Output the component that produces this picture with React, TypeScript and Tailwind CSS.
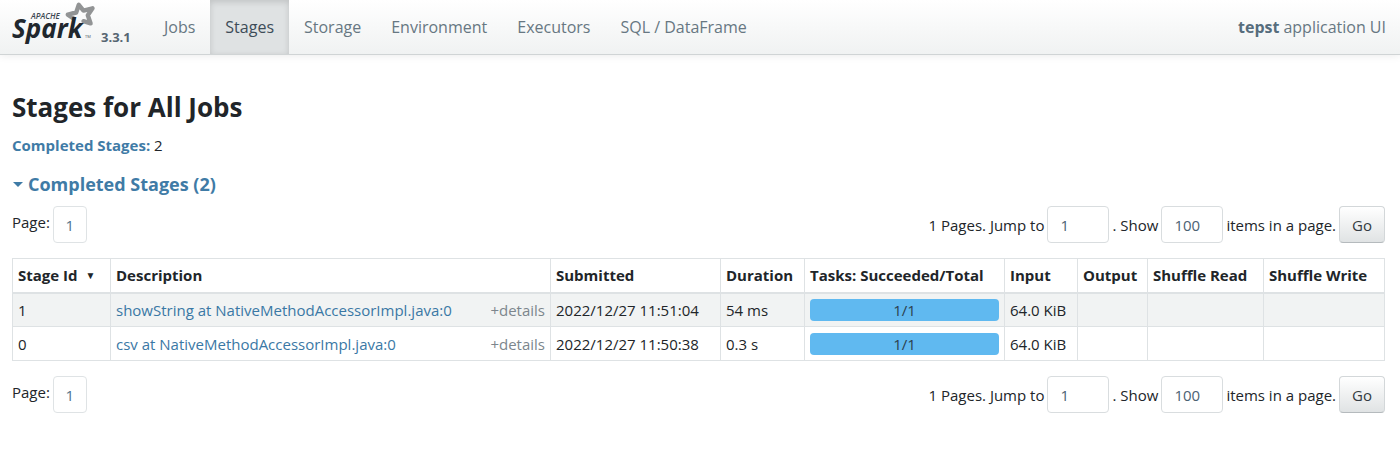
import React from "react";

const tabs = ["Jobs", "Stages", "Storage", "Environment", "Executors", "SQL / DataFrame"];

const stages = [
  { id: 1, name: "showString at NativeMethodAccessorImpl.java:0", submitted: "2022/12/27 11:51:04", duration: "54 ms", done: 1, total: 1, input: "64.0 KiB" },
  { id: 0, name: "csv at NativeMethodAccessorImpl.java:0", submitted: "2022/12/27 11:50:38", duration: "0.3 s", done: 1, total: 1, input: "64.0 KiB" },
];

function SparkLogo() {
  return (
    <svg width="86" height="48" viewBox="0 0 86 48" role="img" aria-label="Apache Spark" className="shrink-0">
      <path
        d="M61.5 18.5L55.8 14.6L64.2 12.5L66.8 4.8L71.5 10.6L80.5 8.3L75.8 15.2L78.6 23.4L71.5 21.2"
        fill="none"
        stroke="#929495"
        strokeWidth="4.4"
        strokeLinejoin="round"
        strokeLinecap="round"
      />
      <text x="19" y="19" fill="#3c4852" fontSize="8" fontWeight="600" fontStyle="italic" fontFamily="Open Sans, sans-serif">
        APACHE
      </text>
      <text x="0" y="38" fill="#20272d" fontSize="26" fontWeight="700" fontStyle="italic" fontFamily="Open Sans, sans-serif">
        Spark
      </text>
      <text x="73" y="38" fill="#4a545c" fontSize="4" fontFamily="Open Sans, sans-serif">
        TM
      </text>
    </svg>
  );
}

function Pagination({ id }: { id: string }) {
  const field = "h-[37px] w-[62px] rounded border border-[#d9dddf] bg-white px-3 text-[#4b6273]";
  return (
    <form className="flex items-start justify-between" onSubmit={(e) => e.preventDefault()}>
      <div className="flex items-start gap-[3px]">
        <span className="leading-8">Page:</span>
        <a href="#page-1" className="flex h-[37px] w-[34px] items-center justify-center rounded border border-[#dfe3e5] text-[#4f738c]">
          1
        </a>
      </div>
      <div className="flex items-center gap-[3px]">
        <label htmlFor={`${id}-jump`}>1 Pages. Jump to</label>
        <input id={`${id}-jump`} className={field} defaultValue="1" />
        <label htmlFor={`${id}-size`}>. Show</label>
        <input id={`${id}-size`} className={field} defaultValue="100" />
        <label htmlFor={`${id}-size`}>items in a page.</label>
        <button className="h-[37px] w-[46px] rounded border border-[#d3d7d9] border-b-[#b5babd] bg-linear-to-b from-white to-[#e0e3e4] text-[#333b41]">
          Go
        </button>
      </div>
    </form>
  );
}

export default function App() {
  const cell = "border border-[#dee2e4] px-[5px]";
  return (
    <div className="bg-white font-['Open_Sans',sans-serif] text-[15px] leading-[22px] text-[#212529]">
      <header className="flex h-[55px] items-stretch border-b border-[#d0d4d5] bg-linear-to-b from-white to-[#f0f2f2] pr-[14px] pl-3 shadow-[0_1px_8px_rgba(0,0,0,0.08)]">
        <div className="flex w-[137px] items-start gap-[3px]">
          <SparkLogo />
          <span className="pt-[26px] text-[13px] font-bold text-[#566572]">3.3.1</span>
        </div>
        <nav className="flex flex-1 items-stretch text-base">
          {tabs.map((t) => (
            <a
              key={t}
              href="#"
              className={
                t === "Stages"
                  ? "flex items-center bg-[#dfe2e3] px-[15px] text-[#3d4c58] shadow-[inset_0_2px_6px_rgba(0,0,0,0.14)]"
                  : "flex items-center px-[15px] text-[#677782]"
              }
            >
              {t}
            </a>
          ))}
        </nav>
        <p className="flex items-center gap-1 text-base text-[#677782]">
          <strong className="font-bold text-[#566d7d]">tepst</strong> application UI
        </p>
      </header>

      <main className="pt-[34px] pr-[15px] pb-10 pl-3">
        <h1 className="text-[26px] leading-9 font-bold">Stages for All Jobs</h1>
        <p className="mt-[9px]">
          <a href="#completed" className="font-bold text-[#3f7ba6]">Completed Stages:</a> 2
        </p>
        <h2 id="completed" className="mt-[15px] mb-[9px] flex items-center gap-1 text-[18px] leading-[26px] font-bold text-[#3f7ba6]">
          <svg width="12" height="12" viewBox="0 0 12 12" aria-hidden="true">
            <path d="M1 4h10L6 9z" fill="currentColor" />
          </svg>
          Completed Stages (2)
        </h2>
        <Pagination id="top" />

        <table className="my-[15px] w-full table-fixed border-collapse text-left">
          <colgroup>
            <col className="w-[98px]" />
            <col />
            <col className="w-[170px]" />
            <col className="w-[84px]" />
            <col className="w-[200px]" />
            <col className="w-[73px]" />
            <col className="w-[70px]" />
            <col className="w-[116px]" />
            <col className="w-[121px]" />
          </colgroup>
          <thead>
            <tr className="h-[34px] border-b-2 border-[#dee2e4] whitespace-nowrap">
              <th className={cell}>
                <span className="flex items-center gap-2">
                  Stage Id <span className="text-[10px]">▼</span>
                </span>
              </th>
              {["Description", "Submitted", "Duration", "Tasks: Succeeded/Total", "Input", "Output", "Shuffle Read", "Shuffle Write"].map((h) => (
                <th key={h} className={cell}>{h}</th>
              ))}
            </tr>
          </thead>
          <tbody>
            {stages.map((s) => (
              <tr key={s.id} className="h-[34px] odd:bg-[#f1f3f3]">
                <td className={cell}>{s.id}</td>
                <td className={cell}>
                  <div className="flex justify-between">
                    <a href="#stage" className="text-[#3a78a5]">{s.name}</a>
                    <button className="text-[#7c868d]">+details</button>
                  </div>
                </td>
                <td className={cell}>{s.submitted}</td>
                <td className={cell}>{s.duration}</td>
                <td className={cell}>
                  <div className="rounded bg-[#60b9f0] text-center text-[#2b3f4e]">
                    {s.done}/{s.total}
                  </div>
                </td>
                <td className={cell}>{s.input}</td>
                <td className={cell} />
                <td className={cell} />
                <td className={cell} />
              </tr>
            ))}
          </tbody>
        </table>

        <Pagination id="bottom" />
      </main>
    </div>
  );
}
